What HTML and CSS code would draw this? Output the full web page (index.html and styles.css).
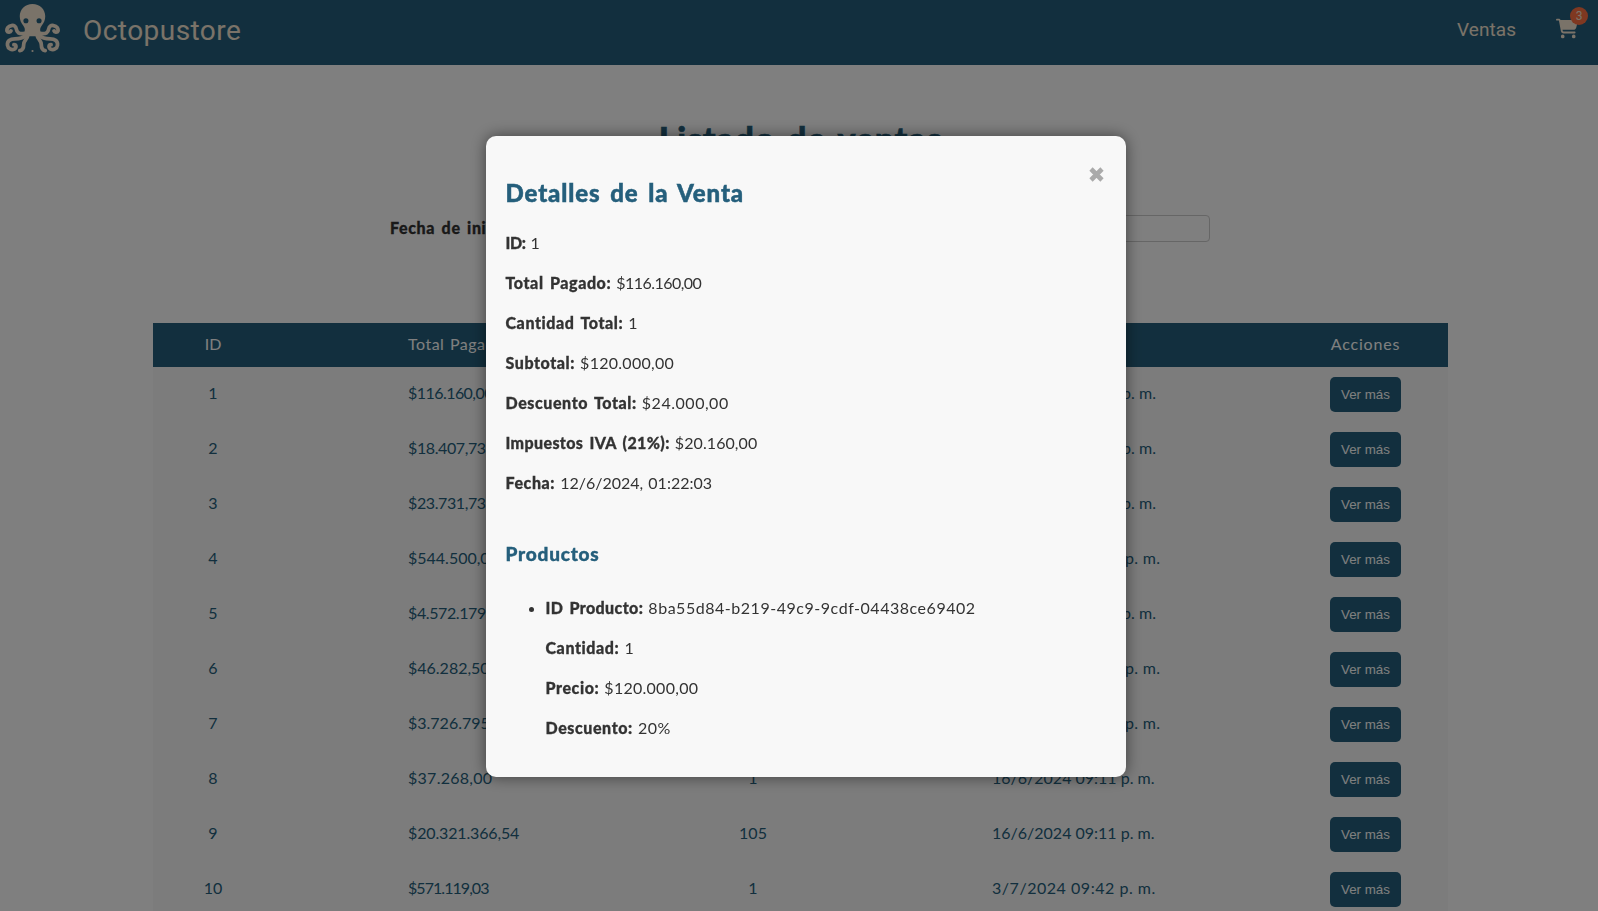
FILE: index.html
```html
<!DOCTYPE html>
<html lang="es">
<head>
<meta charset="utf-8">
<title>Octopustore</title>
<link rel="stylesheet" href="styles.css">
</head>
<body>
<header class="navbar">
  <a class="brand">
    <svg class="logo" viewBox="0 0 56 50" aria-hidden="true">
      <path class="head" fill-rule="evenodd" d="M28 0c-7.500 0-13 5.500-13 12.500 0 4 1.500 7 3.500 9.500 1.500 2 2 3.500 1.500 6l-2 5h20l-2-5c-.500-2.500 0-4 1.500-6 2-2.500 3.500-5.500 3.500-9.500C41 5.500 35.500 0 28 0zM21.300 14.500a2.600 2.600 0 1 1 0 5.200 2.600 2.600 0 0 1 0-5.200zM34.700 14.500a2.600 2.600 0 1 1 0 5.200 2.600 2.600 0 0 1 0-5.200z"/>
      <g class="arms">
        <path d="M20 30c-6 1-8-1-8.500-4.500C11 22.500 9 21.500 6.500 22 3 22.500 1.500 25 2 27.500c.8 2 3.500 1.500 4 0"/>
        <path d="M36 30c6 1 8-1 8.500-4.500.5-3 2.500-4 5-3.500 3.500.5 5 3 4.500 5.500-.8 2-3.500 1.500-4 0"/>
        <path d="M21 32c-3 3-6 3.500-11 3.500-5 0-8 2.500-7.500 6.500.5 3.500 4 5.500 7 4 2.500-1.500 2-4.500-.5-4.500"/>
        <path d="M35 32c3 3 6 3.500 11 3.500 5 0 8 2.500 7.500 6.500-.5 3.500-4 5.500-7 4-2.500-1.500-2-4.500.5-4.500"/>
        <path d="M23.500 31c-.5 5-4.500 6-4.500 10.500 0 3.500-1 5.500-4 6"/>
        <path d="M32.500 31c.5 5 4.500 6 4.500 10.500 0 3.500 1 5.500 4 6"/>
      </g>
      <circle class="head" cx="28" cy="48" r="1.100"/>
    </svg>
    <span class="brand-name">Octopustore</span>
  </a>
  <nav class="nav">
    <a class="nav-link">Ventas</a>
    <a class="cart">
      <svg class="cart-icon" viewBox="0 0 576 512" aria-hidden="true"><path d="M0 24C0 10.700 10.700 0 24 0H69.500c22 0 41.500 12.800 50.600 32h411c26.300 0 45.500 25 38.600 50.400l-41 152.300c-8.500 31.400-37 53.300-69.500 53.300H170.700l5.400 28.500c2.200 11.300 12.100 19.500 23.600 19.500H488c13.300 0 24 10.700 24 24s-10.700 24-24 24H199.700c-34.600 0-64.300-24.600-70.700-58.500L77.400 54.500c-.7-3.800-4-6.500-7.900-6.500H24C10.700 48 0 37.300 0 24zM128 464a48 48 0 1 1 96 0 48 48 0 1 1-96 0zm336-48a48 48 0 1 1 0 96 48 48 0 1 1 0-96z"/></svg>
      <span class="badge">3</span>
    </a>
  </nav>
</header>

<main class="page">
  <h1 class="title">Listado de ventas</h1>
  <form class="filters">
    <label class="field"><span class="field-label">Fecha de inicio:</span><input class="field-input" type="text"></label>
    <label class="field"><span class="field-label">Fecha de fin:</span><input class="field-input" type="text"></label>
  </form>
  <section class="sales">
    <div class="row head-row"><span class="c-id">ID</span><span class="c-total">Total Pagado</span><span class="c-qty">Cantidad</span><span class="c-date">Fecha</span><span class="c-act">Acciones</span></div>
    <div class="row"><span class="c-id">1</span><span class="c-total tight">$116.160,00</span><span class="c-qty">1</span><span class="c-date loose">12/6/2024 01:22 p. m.</span><span class="c-act"><button class="more">Ver más</button></span></div>
    <div class="row"><span class="c-id">2</span><span class="c-total snug">$18.407,73</span><span class="c-qty">1</span><span class="c-date loose">12/6/2024 01:24 p. m.</span><span class="c-act"><button class="more">Ver más</button></span></div>
    <div class="row"><span class="c-id">3</span><span class="c-total snug">$23.731,73</span><span class="c-qty">1</span><span class="c-date loose">12/6/2024 01:25 p. m.</span><span class="c-act"><button class="more">Ver más</button></span></div>
    <div class="row"><span class="c-id">4</span><span class="c-total">$544.500,00</span><span class="c-qty">5</span><span class="c-date airy">12/6/2024 09:20 p. m.</span><span class="c-act"><button class="more">Ver más</button></span></div>
    <div class="row"><span class="c-id">5</span><span class="c-total snug">$4.572.179,20</span><span class="c-qty">8</span><span class="c-date loose">14/6/2024 07:11 p. m.</span><span class="c-act"><button class="more">Ver más</button></span></div>
    <div class="row"><span class="c-id">6</span><span class="c-total">$46.282,50</span><span class="c-qty">1</span><span class="c-date airy">16/6/2024 08:40 p. m.</span><span class="c-act"><button class="more">Ver más</button></span></div>
    <div class="row"><span class="c-id">7</span><span class="c-total">$3.726.795,00</span><span class="c-qty">9</span><span class="c-date airy">16/6/2024 09:06 p. m.</span><span class="c-act"><button class="more">Ver más</button></span></div>
    <div class="row"><span class="c-id">8</span><span class="c-total airy">$37.268,00</span><span class="c-qty">1</span><span class="c-date">16/6/2024 09:11 p. m.</span><span class="c-act"><button class="more">Ver más</button></span></div>
    <div class="row"><span class="c-id">9</span><span class="c-total slim">$20.321.366,54</span><span class="c-qty">105</span><span class="c-date">16/6/2024 09:11 p. m.</span><span class="c-act"><button class="more">Ver más</button></span></div>
    <div class="row"><span class="c-id">10</span><span class="c-total narrow">$571.119,03</span><span class="c-qty">1</span><span class="c-date wide">3/7/2024 09:42 p. m.</span><span class="c-act"><button class="more">Ver más</button></span></div>
  </section>
</main>

<div class="overlay">
  <div class="modal" role="dialog">
    <svg class="close" viewBox="0 0 15 15" aria-label="Cerrar"><path d="M2 2l11 11M13 2L2 13"/></svg>
    <h2 class="modal-title">Detalles de la Venta</h2>
    <p class="line"><b class="plain">ID:</b> <span>1</span></p>
    <p class="line"><b>Total Pagado:</b> <span class="tight">$116.160,00</span></p>
    <p class="line"><b>Cantidad Total:</b> <span>1</span></p>
    <p class="line"><b>Subtotal:</b> <span class="airy">$120.000,00</span></p>
    <p class="line"><b>Descuento Total:</b> <span class="wide">$24.000,00</span></p>
    <p class="line"><b class="tax">Impuestos IVA (21%):</b> <span class="loose">$20.160,00</span></p>
    <p class="line"><b>Fecha:</b> <span>12/6/2024, 01:22:03</span></p>
    <h3 class="modal-subtitle">Productos</h3>
    <ul class="products">
      <li>
        <p class="line"><b class="tax">ID Producto:</b> <span class="wide">8ba55d84-b219-49c9-9cdf-04438ce69402</span></p>
        <p class="line"><b>Cantidad:</b> <span>1</span></p>
        <p class="line"><b>Precio:</b> <span class="airy">$120.000,00</span></p>
        <p class="line"><b>Descuento:</b> <span class="wide">20%</span></p>
      </li>
    </ul>
  </div>
</div>
</body>
</html>
```
FILE: styles.css
```css
* { box-sizing: border-box; }
html, body { height: 100%; }
body { margin: 0; background: #fff; color: #333; font: 16px/24px Lato, "Open Sans", sans-serif; overflow: hidden; }
.navbar { height: 65px; background: #255f7c; display: flex; justify-content: space-between; padding: 0 19px 0 5px; color: #f5e6d3; font-family: Roboto, sans-serif; }
.brand { display: flex; gap: 23px; padding-top: 4px; }
.logo { width: 55px; height: 49px; }
.logo .head { fill: #f5e6d3; }
.arms { fill: none; stroke: #f5e6d3; stroke-width: 3.8; stroke-linecap: round; }
.brand-name { font-size: 28px; line-height: 53px; letter-spacing: .45px; }
.nav { display: flex; gap: 40px; }
.nav-link { font-size: 19px; line-height: 60px; letter-spacing: .05px; }
.cart { position: relative; width: 23px; padding-top: 18px; }
.cart-icon { display: block; width: 22px; height: 21px; fill: #f5e6d3; }
.badge { position: absolute; left: 14px; top: 7px; width: 18px; height: 18px; border-radius: 50%; background: #ff7043; font-size: 12px; line-height: 18px; text-align: center; }
.title { margin: 52px 0 0; padding-left: 3px; text-align: center; color: #255f7c; font-size: 34px; line-height: 44px; font-weight: 900; letter-spacing: .8px; word-spacing: 3px; -webkit-text-stroke: .6px; }
.filters { display: flex; justify-content: space-between; width: 820px; margin: 54px 0 82px 390px; height: 27px; }
.field { display: flex; gap: 8px; font-weight: 900; letter-spacing: .65px; word-spacing: 2px; -webkit-text-stroke: .3px; }
.field-input { width: 180px; height: 27px; border: 1px solid #ccc; border-radius: 4px; background: #fff; }
.field-label { line-height: 25px; }
.sales { width: 1295px; margin: -1px 0 0 153px; background: #f8f8f8; }
.row { display: grid; grid-template-columns: 120px 415px 130px 355px 1fr; height: 55px; align-items: center; color: #255f7c; }
.head-row { height: 44px; background: #255f7c; color: #fff; }
.head-row .c-act { letter-spacing: .8px; }
.head-row .c-total { letter-spacing: .5px; word-spacing: 1px; }
.c-id, .c-qty { text-align: center; }
.c-id, .c-qty, .c-total, .c-date { padding-bottom: 3px; }
.head-row span { padding-bottom: 2px; }
.c-total { padding-left: 135px; }
.c-date { padding-left: 174px; white-space: nowrap; }
.c-act { padding-left: 110px; text-align: center; }
.more { display: block; width: 71px; height: 35px; margin: 0 auto; padding: 0; border: 0; border-radius: 5px; background: #255f7c; color: #fff; font: 13.333px/35px "Liberation Sans", Arial, sans-serif; }
.overlay { position: fixed; inset: 0; background: rgba(0, 0, 0, .5); }
.modal { position: absolute; left: 486px; top: 135.5px; width: 640px; height: 641px; padding: 39px 19.5px; border-radius: 10px; background: #f8f8f8; box-shadow: 0 0 15px rgba(0, 0, 0, .5); }
.close { position: absolute; right: 22.5px; top: 31.5px; width: 15px; height: 15px; }
.close path { stroke: #aaa; stroke-width: 4.6; }
.modal-title { margin: 0 0 20px; color: #255f7c; font-size: 24px; line-height: 36px; font-weight: 900; letter-spacing: .9px; word-spacing: 3px; -webkit-text-stroke: .5px; }
.line { margin: 0 0 16px; word-spacing: 1px; }
.line b { font-weight: 900; letter-spacing: .58px; word-spacing: 2px; -webkit-text-stroke: .3px; }
.line .plain { letter-spacing: -.4px; }
.line .tax { letter-spacing: .38px; }
.narrow { letter-spacing: -.95px; }
.tight { letter-spacing: -.55px; }
.snug { letter-spacing: -.4px; }
.slim { letter-spacing: -.15px; }
.loose { letter-spacing: .08px; }
.airy { letter-spacing: .27px; }
.wide { letter-spacing: .53px; }
.modal-subtitle { margin: 44px 0 27px; color: #255f7c; font-size: 19px; line-height: 30px; font-weight: 900; letter-spacing: .78px; -webkit-text-stroke: .4px; }
.products { margin: 0; padding-left: 40px; }
```
